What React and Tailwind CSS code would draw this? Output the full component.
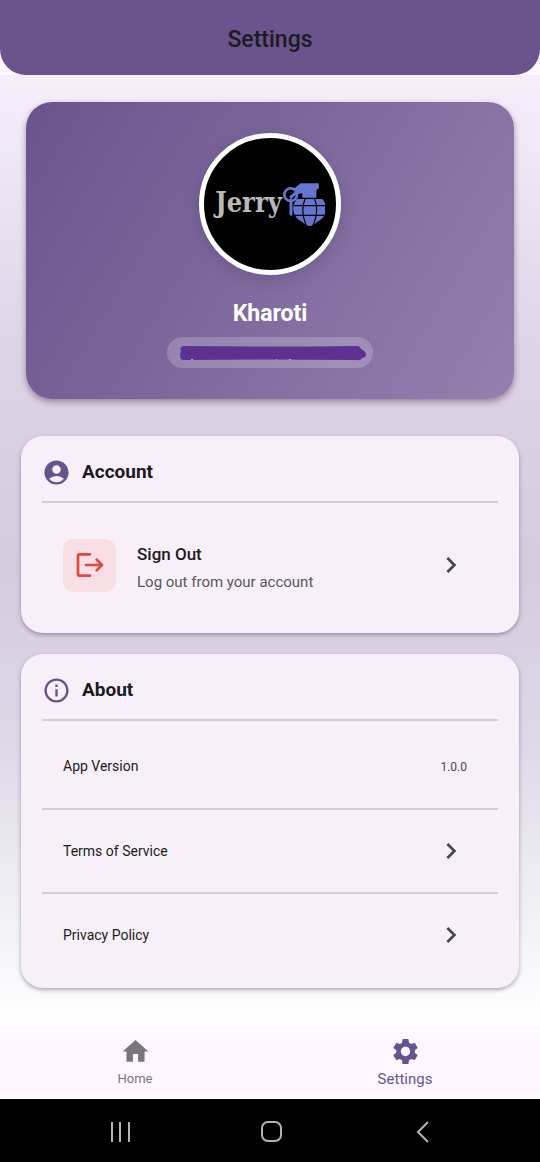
import { MdAccountCircle, MdChevronRight, MdHome, MdInfoOutline, MdSettings } from "react-icons/md";

function Grenade() {
  return (
    <svg viewBox="280 170 126 132" className="h-11 w-[42px] shrink-0" aria-hidden="true">
      <path d="M322 221H398A43 43 0 0 1 382 290Q370 302 360 302Q350 302 338 290A43 43 0 0 1 322 221Z" fill="#6474cf" />
      <path d="M314 241H406M314 270H406M347 219Q330 256 351 303M374 219Q390 256 369 303" fill="none" stroke="#000" strokeWidth="3.5" />
      <path d="M312 190 333 174H387L388 189L380 194V217H338V204L327 205 318 212Z" fill="#6474cf" />
      <circle cx="303" cy="208" r="19" fill="#000" stroke="#6474cf" strokeWidth="8" />
      <path d="M304 224V267M304 215 328 196" fill="none" stroke="#6474cf" strokeWidth="9" strokeLinecap="round" />
    </svg>
  );
}

function SignOutIcon() {
  return (
    <svg viewBox="0 0 24 24" className="size-8" fill="none" stroke="#db4a43" strokeWidth="2" aria-hidden="true">
      <path d="M12 4H4Q3 4 3 5V19Q3 20 4 20H12" strokeLinecap="round" />
      <path d="M9 12H20.500M17 8 21 12 17 16" strokeLinecap="round" strokeLinejoin="round" />
    </svg>
  );
}

function Card({ icon: Icon, title, children }) {
  return (
    <section className="rounded-[22px] bg-[#f7f0f9] px-[21px] shadow-[0_2px_4px_rgba(60,45,80,0.4)]">
      <h2 className="flex h-[65px] items-center gap-[11px] pt-[7px] text-[19px] font-bold text-[#1c1921]">
        <Icon className="size-[29px] text-[#67548e]" />
        {title}
      </h2>
      {children}
    </section>
  );
}

function LinkRow({ label }) {
  return (
    <a href="#" className="flex h-[84px] items-center justify-between border-t-2 border-[#d3ccd8] pr-[31px] pl-[21px]">
      {label}
      <MdChevronRight className="size-8 text-[#49454f]" />
    </a>
  );
}

export default function App() {
  return (
    <div className="flex min-h-screen flex-col bg-[#fef7ff] font-['Roboto',sans-serif] text-[14px] text-[#1d1b20]">
      <header className="flex h-[75px] items-center justify-center rounded-b-[26px] bg-[#69548d] pt-[5px]">
        <h1 className="text-[23px] font-medium">Settings</h1>
      </header>

      <main className="flex flex-1 flex-col bg-[linear-gradient(#f6effa,#dcd3e5_30%,#d5cbdf_52%,#ddd8e6_70%,#f4f4f8_91%,#ffffff)] px-[21px] pt-[27px] pb-[38px]">
        <section className="mx-[5px] mb-[37px] flex flex-col items-center rounded-[26px] bg-[linear-gradient(121deg,#69548d,#9480ae)] pt-[31px] pb-[31px] shadow-[0_3px_6px_rgba(60,45,80,0.45)]">
          <div className="flex size-[142px] items-center justify-center gap-px rounded-full border-[5px] border-white bg-black shadow-[0_4px_14px_rgba(60,45,80,0.25)]">
            <span className="pb-1 font-['DejaVu_Serif_Condensed','DejaVu_Serif',serif] text-[27px] leading-none font-bold text-[#b9b9b9]">Jerry</span>
            <Grenade />
          </div>
          <p className="mt-[25px] text-[23px] leading-7 font-bold text-white">Kharoti</p>
          <div className="mt-[9px] flex h-[31px] w-[206px] items-center justify-center rounded-full bg-white/20">
            <svg viewBox="0 0 192 16" className="h-4 w-48" aria-hidden="true">
              <path d="M9 1Q90 2 183 1Q186 1 187 4Q192 6 192 10Q191 13 188 13Q187 16 182 15Q90 14 10 15Q6 15 6 10L7 6Q5 2 9 1Z" fill="#5d3190" />
              <path d="M17 14.500h2M102 14.500h1M115 14.500h2" stroke="#b9a7cd" />
            </svg>
          </div>
        </section>

        <div className="flex flex-col gap-[21px]">
          <Card icon={MdAccountCircle} title="Account">
            <button type="button" className="flex h-[132px] w-full items-center border-t-2 border-[#d3ccd8] pr-[31px] pb-[6px] pl-[21px] text-left">
              <span className="mr-[21px] flex size-[53px] items-center justify-center rounded-[11px] bg-[#f7dfe5]">
                <SignOutIcon />
              </span>
              <span className="flex flex-1 flex-col gap-1 pt-[5px]">
                <span className="text-[17px] leading-6 font-medium">Sign Out</span>
                <span className="text-[15px] leading-6 text-[#5a5660]">Log out from your account</span>
              </span>
              <MdChevronRight className="size-8 text-[#49454f]" />
            </button>
          </Card>

          <Card icon={MdInfoOutline} title="About">
            <dl className="flex h-[89px] items-center justify-between border-t-2 border-[#d3ccd8] pt-1 pr-[31px] pl-[21px]">
              <dt>App Version</dt>
              <dd className="text-[12px] text-[#49454f]">1.0.0</dd>
            </dl>
            <LinkRow label="Terms of Service" />
            <div className="pb-3">
              <LinkRow label="Privacy Policy" />
            </div>
          </Card>
        </div>
      </main>

      <nav className="grid h-[73px] grid-cols-2 text-center">
        <a href="#" className="flex flex-col items-center pt-[10px] text-[13px] leading-6 text-[#79747e]">
          <MdHome className="size-[31px]" />
          Home
        </a>
        <a href="#" aria-current="page" className="flex flex-col items-center pt-[10px] text-[15px] leading-6 text-[#67548e]">
          <MdSettings className="size-[31px]" />
          Settings
        </a>
      </nav>

      <div className="flex h-[63px] items-center justify-around bg-black pt-[2px] pr-[42px] pl-[46px] text-[#b5b5b5]">
        <button type="button" aria-label="Recent apps">
          <svg viewBox="0 0 24 24" className="size-6" fill="none" stroke="currentColor" strokeWidth="2">
            <path d="M3 2V22M11 2V22M20 2V22" />
          </svg>
        </button>
        <button type="button" aria-label="Home screen">
          <svg viewBox="0 0 24 24" className="size-6" fill="none" stroke="currentColor" strokeWidth="2">
            <rect x="2" y="2" width="19" height="19" rx="6" />
          </svg>
        </button>
        <button type="button" aria-label="Back">
          <svg viewBox="0 0 24 24" className="size-6" fill="none" stroke="currentColor" strokeWidth="2">
            <path d="M17 2 7 12 17 22" />
          </svg>
        </button>
      </div>
    </div>
  );
}
